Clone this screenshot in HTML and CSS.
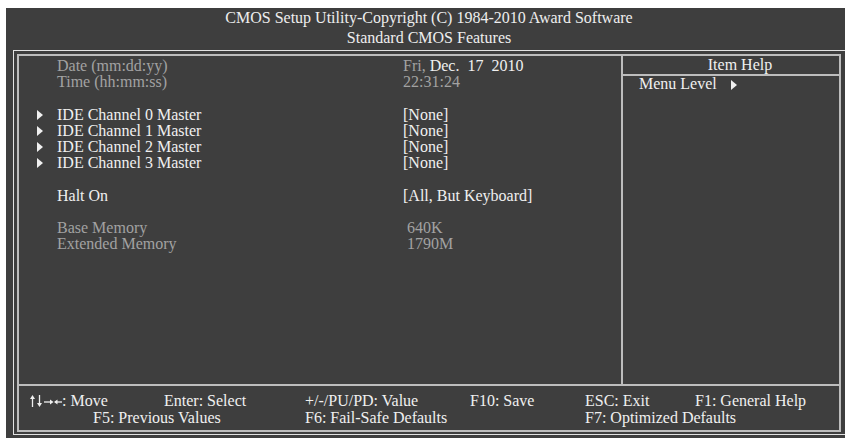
FILE: index.html
```html
<!DOCTYPE html>
<html>
<head>
    <title>Standard CMOS Features</title>
    <link rel="stylesheet" href="styles.css">
</head>
<body>
    <div class="screen">
        <div class="title">
            CMOS Setup Utility-Copyright (C) 1984-2010 Award Software<br>
            Standard CMOS Features
        </div>
        <div class="frame">
            <div class="box">
                <div class="main">
                    <div class="items">
                        <div class="row dim"><span class="mark"></span><span class="label">Date (mm:dd:yy)</span><span class="value">Fri, <span class="lit">Dec.&nbsp; 17&nbsp; 2010</span></span></div>
                        <div class="row dim"><span class="mark"></span><span class="label">Time (hh:mm:ss)</span><span class="value">22:31:24</span></div>
                        <div class="row"></div>
                        <div class="row"><span class="mark"><i class="tri"></i></span><span class="label">IDE Channel 0 Master</span><span class="value">[None]</span></div>
                        <div class="row"><span class="mark"><i class="tri"></i></span><span class="label">IDE Channel 1 Master</span><span class="value">[None]</span></div>
                        <div class="row"><span class="mark"><i class="tri"></i></span><span class="label">IDE Channel 2 Master</span><span class="value">[None]</span></div>
                        <div class="row"><span class="mark"><i class="tri"></i></span><span class="label">IDE Channel 3 Master</span><span class="value">[None]</span></div>
                        <div class="row"></div>
                        <div class="row"><span class="mark"></span><span class="label">Halt On</span><span class="value">[All, But Keyboard]</span></div>
                        <div class="row"></div>
                        <div class="row dim"><span class="mark"></span><span class="label">Base Memory</span><span class="value mem">640K</span></div>
                        <div class="row dim"><span class="mark"></span><span class="label">Extended Memory</span><span class="value mem">1790M</span></div>
                    </div>
                    <div class="help">
                        <div class="help-title">Item Help</div>
                        <div class="help-text">Menu Level <i class="tri"></i></div>
                    </div>
                </div>
                <div class="keys">
                    <div class="keyrow first">
                        <span class="k1"><svg class="arrows" width="32" height="12" viewBox="0 0 32 12" fill="#f0f0f0" stroke="#f0f0f0" stroke-width="1.3">
                            <line x1="2.5" y1="3" x2="2.5" y2="12"/><polygon stroke="none" points="0,4 2.5,0 5,4"/>
                            <line x1="9.5" y1="0" x2="9.5" y2="9"/><polygon stroke="none" points="7,8 9.5,12 12,8"/>
                            <line x1="14" y1="7" x2="21" y2="7"/><polygon stroke="none" points="20,4.5 23.5,7 20,9.5"/>
                            <line x1="25.5" y1="7" x2="32" y2="7"/><polygon stroke="none" points="27.5,4.5 24,7 27.5,9.5"/>
                        </svg>: Move</span>
                        <span class="k2">Enter: Select</span>
                        <span class="k3">+/-/PU/PD: Value</span>
                        <span class="k4">F10: Save</span>
                        <span class="k5">ESC: Exit</span>
                        <span>F1: General Help</span>
                    </div>
                    <div class="keyrow second">
                        <span class="k6">F5: Previous Values</span>
                        <span class="k7">F6: Fail-Safe Defaults</span>
                        <span>F7: Optimized Defaults</span>
                    </div>
                </div>
            </div>
        </div>
    </div>
</body>
</html>
```

FILE: styles.css
```css
body {
    margin: 0;
    background: #ffffff;
    font-family: "Liberation Serif", "Times New Roman", serif;
    font-size: 16px;
    overflow: hidden;
}
.screen {
    margin: 8px 0 0 6px;
    width: 839px;
    height: 430px;
    background: #3e3e3e;
    color: #f0f0f0;
    overflow: hidden;
}
.title {
    height: 42px;
    padding-left: 7px;
    text-align: center;
    line-height: 20px;
    color: #eeeeee;
    box-sizing: border-box;
}
.frame {
    margin-left: 7px;
    width: 850px;
    border: 1px solid #e2e2e2;
    padding: 3px 0 2px 3px;
}
.box {
    width: 824px;
    height: 378px;
    border: 2px solid #bdbdbd;
    box-sizing: border-box;
    display: flex;
    flex-direction: column;
}
.main {
    height: 328px;
    display: flex;
}
.items {
    width: 602px;
    border-right: 2px solid #bdbdbd;
    padding-top: 2px;
}
.row {
    display: flex;
    height: 16.2px;
    line-height: 16px;
    white-space: nowrap;
}
.mark {
    width: 38px;
    display: flex;
    align-items: center;
    padding-left: 18px;
    box-sizing: border-box;
}
.label {
    width: 346px;
}
.dim {
    color: #a2a2a2;
}
.lit {
    color: #f0f0f0;
}
.mem {
    padding-left: 4px;
}
.tri {
    display: inline-block;
    width: 0;
    height: 0;
    border-left: 6px solid #f0f0f0;
    border-top: 5px solid transparent;
    border-bottom: 5px solid transparent;
}
.help {
    flex: 1;
}
.help-title {
    height: 18px;
    line-height: 18px;
    border-bottom: 2px solid #bdbdbd;
    text-align: center;
    padding-left: 18px;
}
.help-text {
    padding-left: 16px;
    line-height: 16px;
    white-space: pre;
}
.help-text .tri {
    margin-left: 10px;
    vertical-align: -1px;
}
.keys {
    flex: 1;
    border-top: 2px solid #bdbdbd;
    padding-top: 6px;
    box-sizing: border-box;
}
.keyrow {
    display: flex;
    line-height: 17px;
    white-space: nowrap;
}
.arrows {
    vertical-align: -1px;
}
.first {
    padding-left: 11px;
}
.second {
    padding-left: 74px;
}
.k1 { width: 134px; }
.k2 { width: 141px; }
.k3 { width: 165px; }
.k4 { width: 115px; }
.k5 { width: 110px; }
.k6 { width: 212px; }
.k7 { width: 280px; }
```
